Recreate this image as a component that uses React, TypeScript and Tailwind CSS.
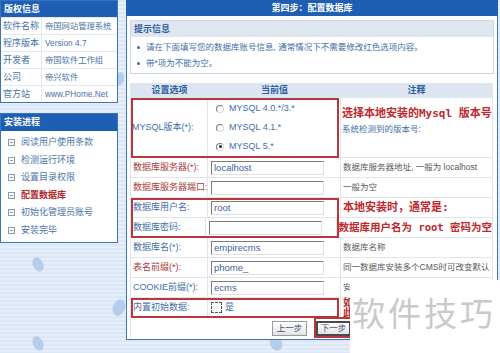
import React from "react";

const RED_ANN = "font-['DejaVu_Sans_Mono','Noto_Sans_CJK_SC',monospace] font-bold text-[#c0282d]";

function Leaf({ x, y, r = 0, w = 10, h = 15 }: { x: number; y: number; r?: number; w?: number; h?: number }) {
  return (
    <svg className="absolute" style={{ left: x, top: y }} width={w + 4} height={h + 4} viewBox={`0 0 ${w + 4} ${h + 4}`}>
      <ellipse cx={(w + 4) / 2} cy={(h + 4) / 2} rx={w / 2} ry={h / 2} fill="#b5cdec" transform={`rotate(${r} ${(w + 4) / 2} ${(h + 4) / 2})`} />
    </svg>
  );
}

function Sidebar() {
  const rows: [string, string][] = [
    ["软件名称", "帝国网站管理系统"],
    ["程序版本", "Version 4.7"],
    ["开发者", "帝国软件工作组"],
    ["公司", "帝兴软件"],
    ["官方站", "www.PHome.Net"],
  ];
  const steps = ["阅读用户使用条款", "检测运行环境", "设置目录权限", "配置数据库", "初始化管理员账号", "安装完毕"];
  return (
    <div className="w-[118px] flex flex-col gap-[10px]">
      <div className="border border-[#3b74bd] bg-white">
        <div className="h-[16px] bg-[#1e5fb4] text-white font-bold pl-[3px] flex items-center">版权信息</div>
        {rows.map(([a, b], i) => (
          <div key={i} className="h-[17px] flex items-center border-t border-[#e3e8ef] text-[#4a74a8] whitespace-nowrap overflow-hidden">
            <div className="w-[41px] shrink-0 pl-[2px] h-full flex items-center border-r border-[#e3e8ef]">{a}</div>
            <div className="pl-[3px] text-[8.3px] text-[#4a74a8]">{b}</div>
          </div>
        ))}
      </div>
      <div className="border border-[#3b74bd] bg-white">
        <div className="h-[17px] bg-[#1e5fb4] text-white font-bold pl-[3px] flex items-center">安装进程</div>
        <div className="py-[3px]">
          {steps.map((s, i) => (
            <div key={i} className="h-[17.5px] flex items-center pl-[7px] gap-[6px]">
              <span className="w-[7px] h-[7px] border border-[#8a9ab0] flex items-center justify-center">
                <span className="w-[3px] h-[1px] bg-[#8a9ab0]" />
              </span>
              <span className={i === 3 ? "text-[#b3262a] font-bold" : "text-[#4a74a8]"}>{s}</span>
            </div>
          ))}
        </div>
      </div>
    </div>
  );
}

function Input({ value = "" }: { value?: string }) {
  return (
    <div className="w-[113px] h-[14px] bg-white border border-t-[#7b7b7b] border-l-[#7b7b7b] border-r-[#e0e0e0] border-b-[#e0e0e0] flex items-center pl-[2px] text-[#3a62a0] text-[9.5px]">
      {value}
    </div>
  );
}

function Radio({ checked = false }: { checked?: boolean }) {
  return (
    <span className="w-[8px] h-[8px] rounded-full border border-t-[#7a7a7a] border-l-[#7a7a7a] border-r-[#d8d8d8] border-b-[#d8d8d8] bg-white flex items-center justify-center">
      {checked && <span className="w-[3px] h-[3px] rounded-full bg-[#222]" />}
    </span>
  );
}

function Row({
  label,
  red = false,
  children,
  note,
}: {
  label: string;
  red?: boolean;
  children?: React.ReactNode;
  note?: React.ReactNode;
}) {
  return (
    <div className="h-[20px] flex border-b border-[#e1e5ea]">
      <div className={`w-[77px] pl-[2px] flex items-center whitespace-nowrap border-r border-[#e1e5ea] ${red ? "text-[#a63b3b]" : "text-[#3f6ea8]"}`}>{label}</div>
      <div className="w-[133px] pl-[3px] flex items-center border-r border-[#e1e5ea]">{children}</div>
      <div className="flex-1 pl-[2px] flex items-center text-[#5a5a5a] text-[8.5px] whitespace-nowrap">{note}</div>
    </div>
  );
}

function Main() {
  return (
    <div className="w-[372px] flex flex-col">
      <div className="h-[16px] bg-[#1e5fb4] text-white font-bold flex items-center justify-center">第四步：配置数据库</div>
      <div className="bg-white border-x border-b border-[#3b74bd] px-[3px] pt-[4px] pb-[1px]">
        <div className="border border-[#ccd6e2]">
          <div className="h-[16px] bg-[#dfe6f0] text-[#2d5ea4] font-bold flex items-center pl-[3px]">提示信息</div>
          <div className="py-[2px] text-[#3f6ea8] text-[8.5px]">
            <div className="h-[16px] flex items-center pl-[6px] gap-[6px]">
              <span className="w-[3px] h-[3px] rounded-full bg-[#3f6ea8]" />
              请在下面填写您的数据库账号信息, 通常情况下不需要修改红色选项内容。
            </div>
            <div className="h-[16px] flex items-center pl-[6px] gap-[6px]">
              <span className="w-[3px] h-[3px] rounded-full bg-[#3f6ea8]" />
              带*项为不能为空。
            </div>
          </div>
        </div>

        <div className="relative mt-[9px] w-[363px] border-x border-[#e1e5ea]">
          <div className="h-[15px] flex bg-[#dde6f0] text-[#2d5ea4] font-bold">
            <div className="w-[77px] flex items-center justify-center">设置选项</div>
            <div className="w-[133px] flex items-center justify-center">当前值</div>
            <div className="flex-1 flex items-center justify-center">注释</div>
          </div>

          <div className="h-[60px] flex border-b border-[#e1e5ea]">
            <div className="w-[77px] pl-[1px] flex items-center border-r border-[#e1e5ea] text-[#3f6ea8]">MYSQL版本(*):</div>
            <div className="w-[133px] pl-[8px] flex flex-col justify-center gap-[10px] border-r border-[#e1e5ea] text-[#3f6ea8] text-[9px]">
              <div className="flex items-center gap-[5px]"><Radio />MYSQL 4.0.*/3.*</div>
              <div className="flex items-center gap-[5px]"><Radio />MYSQL 4.1.*</div>
              <div className="flex items-center gap-[5px]"><Radio checked />MYSQL 5.*</div>
            </div>
            <div className="flex-1 pl-[1px] pt-[10px] flex flex-col gap-[6px] whitespace-nowrap">
              <div className={`${RED_ANN} text-[11px]`}>选择本地安装的Mysql 版本号</div>
              <div className="text-[#3f6ea8] text-[8.5px]">系统检测到的版本号:</div>
            </div>
          </div>

          <Row label="数据库服务器(*):" red note="数据库服务器地址, 一般为 localhost"><Input value="localhost" /></Row>
          <Row label="数据库服务器端口:" red note="一般为空"><Input /></Row>
          <Row label="数据库用户名:" note={<span className={`${RED_ANN} text-[11px]`}>本地安装时，通常是:</span>}><Input value="root" /></Row>
          <Row label="数据库密码:" note={<span className={`${RED_ANN} text-[10.5px]`}>数据库用户名为 root 密码为空</span>}><Input /></Row>
          <Row label="数据库名(*):" note="数据库名称"><Input value="empirecms" /></Row>
          <Row label="表名前缀(*):" red note="同一数据库安装多个CMS时可改变默认"><Input value="phome_" /></Row>
          <Row label="COOKIE前缀(*):" note="安"><Input value="ecms" /></Row>
          <Row
            label="内置初始数据:"
            note={
              <div className="flex flex-col text-[#b3262a] font-bold text-[10px] leading-[10px]">
                <span>如</span>
                <span>此</span>
              </div>
            }
          >
            <span className="w-[11px] h-[11px] border border-dashed border-[#555] bg-white mr-[3px]" />
            <span className="text-[#3f6ea8]">是</span>
          </Row>

          <div className="h-[20px] flex items-center justify-center gap-[9px]">
            <div className="w-[35px] h-[15px] border border-[#9a9a9a] bg-[linear-gradient(#ffffff,#e3e3e3)] flex items-center justify-center text-[#3a4a6a] text-[8.5px]">上一步</div>
            <div className="w-[35px] h-[15px] border-2 border-[#4a4a4a] bg-[linear-gradient(#ffffff,#e3e3e3)] flex items-center justify-center text-[#3a4a6a] text-[8.5px]">下一步</div>
          </div>

          <div className="absolute left-[0px] top-[15px] w-[208px] h-[60px] border-2 border-[#b5383c]" />
          <div className="absolute left-[0px] top-[115px] w-[208px] h-[40px] border-2 border-[#b5383c]" />
          <div className="absolute left-[0px] top-[215px] w-[208px] h-[20px] border-2 border-[#b5383c]" />
          <div className="absolute left-[183px] top-[234px] w-[40px] h-[21px] border-2 border-[#b5383c]" />
        </div>
      </div>
    </div>
  );
}

export default function App() {
  return (
    <div className="relative w-[500px] h-[353px] overflow-hidden bg-[repeating-linear-gradient(180deg,#dbe7f6_0px,#dbe7f6_2px,#e5eefa_2px,#e5eefa_4px)] font-['Liberation_Sans','Noto_Sans_CJK_SC',sans-serif] text-[9px] leading-none">
      <Leaf x={31} y={255} r={-25} />
      <Leaf x={111} y={297} r={20} w={12} h={17} />
      <Leaf x={31} y={334} r={-25} />
      <Leaf x={113} y={70} r={15} w={9} h={14} />
      <Leaf x={268} y={333} r={-20} w={12} h={16} />
      <div className="relative flex gap-[8px]">
        <Sidebar />
        <Main />
      </div>
      <div className="absolute left-[350px] top-[280px] w-[150px] h-[73px] bg-white flex items-start pt-[16px] pl-[2px]">
        <span className="font-['Noto_Sans_CJK_SC',sans-serif] text-[33px] leading-none tracking-[3px] text-[#c9c9c9]">软件技巧</span>
      </div>
    </div>
  );
}
